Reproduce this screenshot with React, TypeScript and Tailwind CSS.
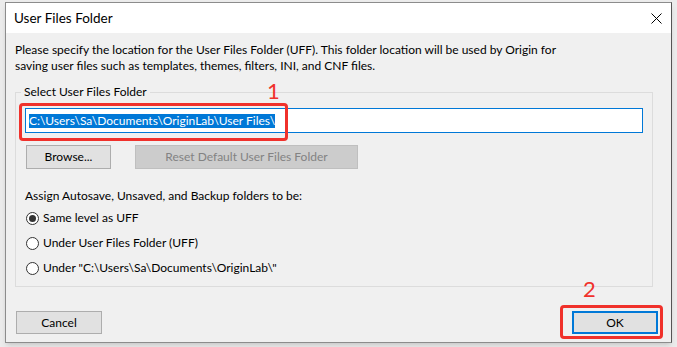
const font = "[font-family:'Lato','Liberation_Sans',sans-serif]";

const radios = [
  { label: "Same level as UFF", checked: true },
  { label: "Under User Files Folder (UFF)", checked: false },
  { label: 'Under "C:\\Users\\Sa\\Documents\\OriginLab\\"', checked: false },
];

const Radio = ({ checked }: { checked: boolean }) => (
  <span className="w-[13px] h-[13px] rounded-full border border-[#333333] bg-white flex items-center justify-center shrink-0">
    {checked && <span className="w-[7px] h-[7px] rounded-full bg-[#333333]" />}
  </span>
);

export default function App() {
  return (
    <div className={`w-[677px] h-[347px] overflow-hidden bg-[#ececec] pt-[2px] pl-[5px] ${font}`}>
      <div className="relative w-[667px] h-[341px] flex flex-col border border-[#8c8c8c] border-r-[#555555] bg-[#f0f0f0] shadow-md">
        {/* Title bar */}
        <div className="h-[30px] bg-white flex items-center justify-between pl-[8px] pr-[9px] shrink-0">
          <span className="text-[13.5px] text-[#000000]">User Files Folder</span>
          <svg width="11" height="11" viewBox="0 0 11 11">
            <path d="M0.5 0.5 L10.5 10.5 M10.5 0.5 L0.5 10.5" stroke="#000" strokeWidth="1" />
          </svg>
        </div>

        {/* Body */}
        <div className="flex flex-col px-[9px]">
          <p className="mt-[9px] text-[12px] leading-[16px] text-black">
            Please specify the location for the User Files Folder (UFF). This folder location will be used by Origin for
            <br />
            saving user files such as templates, themes, filters, INI, and CNF files.
          </p>

          <fieldset className="mt-[10px] w-[638px] border border-[#dcdcdc] pl-[9px] pr-[9px] pb-[10px]">
            <legend className="-ml-[4px] px-[3px] text-[12px] leading-[16px] text-black">Select User Files Folder</legend>
            <div className="mt-[8px] h-[25px] w-[618px] border border-[#0078d7] bg-white flex items-center pl-[3px]">
              <span className="bg-[#0078d7] text-white text-[12px] leading-[14px]">C:\Users\Sa\Documents\OriginLab\User Files\</span>
            </div>
            <div className="mt-[12px] flex items-center gap-[24px] ml-[1px]">
              <button className="w-[85px] h-[24px] bg-[#e1e1e1] border border-[#adadad] text-[12px] text-black">Browse...</button>
              <button className="w-[223px] h-[24px] bg-[#cccccc] border border-[#bfbfbf] text-[12px] text-[#838383]">
                Reset Default User Files Folder
              </button>
            </div>
            <p className="mt-[19px] text-[12px] leading-[16px] text-black">Assign Autosave, Unsaved, and Backup folders to be:</p>
            <div className="mt-[6px] flex flex-col gap-[9px]">
              {radios.map((r) => (
                <label key={r.label} className="h-[16px] flex items-center gap-[4px] text-[12px] text-black ml-[1px]">
                  <Radio checked={r.checked} />
                  {r.label}
                </label>
              ))}
            </div>
          </fieldset>

          <div className="mt-[24px] w-[642px] flex justify-between ml-[1px]">
            <button className="w-[86px] h-[23px] bg-[#e1e1e1] border border-[#adadad] text-[12px] text-black">Cancel</button>
            <button className="w-[86px] h-[23px] bg-[#e1e1e1] border-2 border-[#0078d7] text-[12px] text-black">OK</button>
          </div>
        </div>

        {/* Red annotations */}
        <div className="absolute left-[13px] top-[100px] w-[269px] h-[38px] border-[3px] border-[#f0312b] rounded-[4px]" />
        <span className="absolute left-[261px] top-[76px] text-[22px] leading-[24px] text-[#f0312b]">1</span>
        <div className="absolute left-[554px] top-[302px] w-[103px] h-[34px] border-[3px] border-[#f0312b] rounded-[4px]" />
        <span className="absolute left-[577px] top-[274px] text-[22px] leading-[24px] text-[#f0312b]">2</span>
      </div>
    </div>
  );
}
